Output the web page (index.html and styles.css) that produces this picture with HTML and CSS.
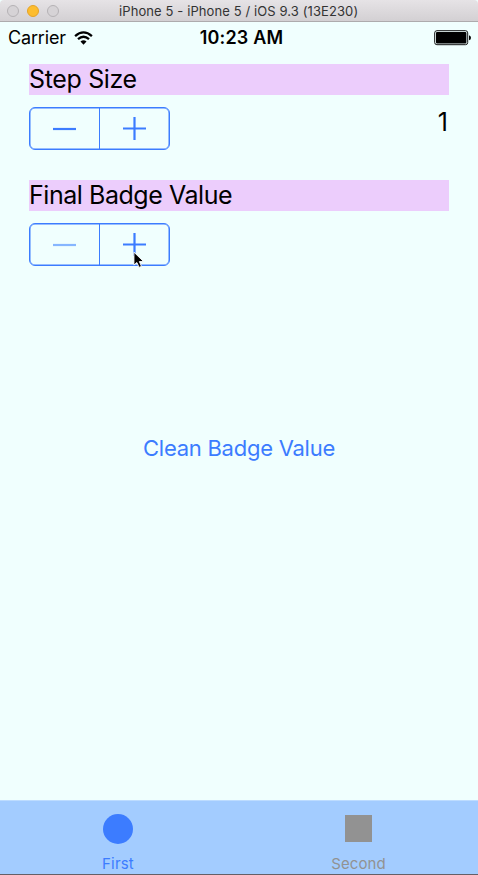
FILE: index.html
```html
<!DOCTYPE html>
<html lang="en">
<head>
<meta charset="utf-8">
<title>iPhone 5</title>
<link rel="stylesheet" href="styles.css">
</head>
<body>
<div class="window">
  <header class="titlebar">
    <div class="lights"><i class="light"></i><i class="light light-amber"></i><i class="light"></i></div>
    <span class="window-title">iPhone 5 - iPhone 5 / iOS 9.3 (13E230)</span>
  </header>
  <div class="status">
    <div class="carrier"><span class="carrier-name">Carrier</span>
      <svg class="wifi" width="19" height="14" viewBox="0 0 19 14"><g fill="none" stroke="#000" stroke-width="2.3"><path d="M1.1 5.2Q9.5-2.4 17.9 5.2"/><path d="M4 8.2Q9.5 3.3 15 8.2"/></g><path d="M6.5 10.6Q9.5 8 12.5 10.6L9.5 13.7Z"/></svg>
    </div>
    <span class="clock">10:23 AM</span>
    <svg class="battery" width="38" height="16" viewBox="0 0 38 16"><rect x=".7" y=".7" width="33" height="14" rx="2.2" fill="none" stroke="#111"/><rect x="2" y="2" width="30.4" height="11.4" rx="1"/><path d="M35 5.2Q37 5.7 37 7.7T35 10.2Z"/></svg>
  </div>
  <main class="content">
    <h2 class="label"><span class="step-title">Step Size</span></h2>
    <div class="row">
      <div class="stepper">
        <button class="half" aria-label="Decrease"><svg width="24" height="24" viewBox="0 0 24 24"><path d="M0 12h23"/></svg></button>
        <button class="half" aria-label="Increase"><svg width="24" height="24" viewBox="0 0 24 24"><path d="M0 11.5h23M11.5 0v23"/></svg></button>
      </div>
      <span class="value">1</span>
    </div>
    <h2 class="label"><span class="badge-title">Final Badge Value</span></h2>
    <div class="row">
      <div class="stepper">
        <button class="half disabled" aria-label="Decrease"><svg width="24" height="24" viewBox="0 0 24 24"><path d="M0 12h23"/></svg></button>
        <button class="half" aria-label="Increase"><svg width="24" height="24" viewBox="0 0 24 24"><path d="M0 11.5h23M11.5 0v23"/></svg></button>
        <svg class="cursor" width="12" height="18" viewBox="0 0 13 19"><path d="M1 1V15L4.2 12.2L6.6 17.5L9.2 16.4L6.9 11.2H11.5Z" fill="#000" stroke="#fff"/></svg>
      </div>
    </div>
    <button class="clean"><span class="clean-text">Clean Badge Value</span></button>
  </main>
  <nav class="tabs">
    <div class="tab active"><i class="icon circle"></i><span class="first-text">First</span></div>
    <div class="tab"><i class="icon square"></i><span class="second-text">Second</span></div>
  </nav>
</div>
</body>
</html>
```
FILE: styles.css
```css
* { box-sizing: border-box; }
body { margin: 0; font-family: Inter, "Liberation Sans", sans-serif; color: #000; }
button { font: inherit; border: 0; padding: 0; margin: 0; background: none; }
span { white-space: nowrap; }
.window { width: 478px; height: 875px; background: #f0fffe; display: flex; flex-direction: column; overflow: hidden; }
.titlebar { height: 22px; flex: none; display: flex; align-items: center; background: linear-gradient(#e6e3e6, #d3d0d3); border-bottom: 1px solid #adabad; border-radius: 4px 4px 0 0; }
.lights { display: flex; gap: 8px; margin-left: 7px; width: 112px; padding-top: 1px; }
.light { width: 12px; height: 12px; border: 1px solid #b5b2b5; border-radius: 50%; background: #d6d3d6; }
.light-amber { background: #fdbd2e; border-color: #e5a327; }
.window-title { font-size: 13px; letter-spacing: .1px; line-height: 20px; color: #333; padding-top: 1px; }
.status { height: 42px; flex: none; display: grid; grid-template-columns: 1fr auto 1fr; align-items: start; padding: 4px 6px 0 8px; }
.carrier { display: flex; align-items: center; gap: 8px; height: 22px; font-size: 18px; letter-spacing: -.15px; }
.wifi { margin-top: 1px; }
.clock { font-size: 18px; font-weight: 600; letter-spacing: .15px; line-height: 24px; margin-left: 3px; }
.battery { justify-self: end; margin-top: 4px; }
.content { flex: 1; padding: 0 29px; display: flex; flex-direction: column; }
.label { margin: 0; height: 31px; background: #eccdfc; font-size: 25px; letter-spacing: -.45px; font-weight: 400; line-height: 31px; }
.step-title { letter-spacing: -.35px; }
.row { display: flex; justify-content: space-between; align-items: flex-start; height: 85px; padding-top: 12px; }
.stepper { position: relative; display: flex; width: 141px; height: 43px; border: 1px solid #3c7cff; border-radius: 6px; box-shadow: inset 0 0 0 .5px #3c7cff; }
.half { flex: 1; display: flex; align-items: center; justify-content: center; }
.half + .half { border-left: 1px solid #3c7cff; }
.half path { fill: none; stroke: #3c7cff; stroke-width: 2.2; }
.half.disabled path { stroke: #86b6ff; }
.cursor { position: absolute; left: 103px; top: 27px; }
.value { font-size: 25px; line-height: 31px; margin-right: 1px; }
.clean { align-self: center; margin-top: 137px; height: 30px; line-height: 30px; font-size: 22px; letter-spacing: -.25px; color: #3c7cff; }
.tabs { height: 75px; flex: none; display: flex; background: #a3ccff; border-top: 1px solid #bddcff; border-bottom: 1px solid #655f67; }
.tab { width: 242px; display: flex; flex-direction: column; align-items: center; font-size: 15px; line-height: 20px; color: #929292; padding-left: 3px; }
.active { width: 236px; padding-left: 0; color: #3c7cff; }
.first-text { letter-spacing: .2px; }
.second-text { letter-spacing: .1px; }
.icon { height: 30px; margin: 13px 0 10px; }
.circle { width: 30px; background: #3c7cff; border-radius: 50%; }
.square { width: 27px; height: 27px; margin: 14px 0 12px; background: #929292; }
```
